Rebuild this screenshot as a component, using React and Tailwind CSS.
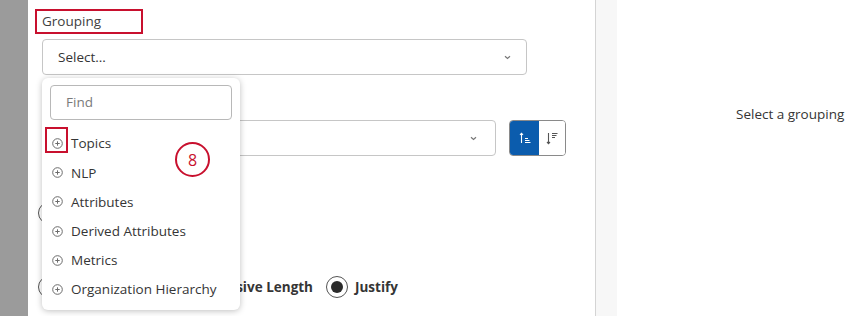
import React from "react";

const font = { fontFamily: '"Open Sans", "Liberation Sans", sans-serif' };

function PlusCircle() {
  return (
    <svg width="11" height="11" viewBox="0 0 11 11" className="shrink-0">
      <circle cx="5.5" cy="5.5" r="4.8" fill="none" stroke="#6b6b6b" strokeWidth="1" />
      <path d="M5.5 3.3v4.4M3.3 5.5h4.4" stroke="#6b6b6b" strokeWidth="1" />
    </svg>
  );
}

function Chevron() {
  return (
    <svg width="7" height="5" viewBox="0 0 7 5">
      <path d="M1 1.2l2.5 2.3L6 1.2" fill="none" stroke="#777" strokeWidth="1.2" />
    </svg>
  );
}

function Radio({ checked }) {
  return (
    <span className="inline-flex h-[22px] w-[22px] shrink-0 items-center justify-center rounded-full border border-[#555] bg-white">
      {checked && <span className="h-[12px] w-[12px] rounded-full bg-[#2b2b2b]" />}
    </span>
  );
}

const items = ["Topics", "NLP", "Attributes", "Derived Attributes", "Metrics", "Organization Hierarchy"];

export default function App() {
  return (
    <div className="relative flex h-[316px] w-[850px] overflow-hidden bg-white text-[#353535]" style={font}>
      <div className="w-[28px] shrink-0 bg-[#9b9b9b]" />
      <div className="flex w-[568px] shrink-0 flex-col border-r border-[#d4d4d4] bg-white">
        <div className="ml-[7px] mt-[9px] flex h-[25px] w-[108px] items-center border-2 border-[#c8102e] pl-[5px] text-[13.5px] text-[#404040]">
          Grouping
        </div>
        <div className="ml-[14px] mt-[5px] flex h-[36px] w-[485px] items-center justify-between rounded-[4px] border border-[#c6c6c6] pl-[15px] pr-[15px] text-[13.5px] text-[#353535]">
          <span>Select...</span>
          <Chevron />
        </div>
        <div className="ml-[14px] mt-[45px] flex items-center gap-[13px]">
          <div className="flex h-[36px] w-[454px] items-center justify-end rounded-[4px] border border-[#c6c6c6] pr-[18px]">
            <Chevron />
          </div>
          <div className="flex h-[36px] w-[57px] overflow-hidden rounded-[4px] border border-[#8a8a8a]">
            <div className="flex w-[29px] items-center justify-center bg-[#0b5cad]">
              <svg width="12" height="12" viewBox="0 0 12 12">
                <path d="M2.5 11V1.2M1 2.8l1.5-1.6 1.5 1.6" fill="none" stroke="#fff" strokeWidth="1.1" />
                <path d="M6 6.5h3M6 8.5h4.5M6 10.5h5.5" stroke="#fff" strokeWidth="1" />
              </svg>
            </div>
            <div className="flex flex-1 items-center justify-center bg-white">
              <svg width="12" height="13" viewBox="0 0 12 13">
                <path d="M2.5 1v10.5M1 10l1.5 1.6L4 10" fill="none" stroke="#555" strokeWidth="1.1" />
                <path d="M6 1.5h5.5M6 3.5h4.5M6 5.5h3" stroke="#555" strokeWidth="1" />
              </svg>
            </div>
          </div>
        </div>
        <div className="ml-[10px] mt-[46px] flex items-center">
          <Radio />
        </div>
        <div className="ml-[10px] mt-[52px] flex items-center text-[13.5px] font-bold text-[#353535]">
          <Radio />
          <span className="ml-[8px] w-[245px] text-right whitespace-nowrap">Progressive Length</span>
          <span className="ml-[13px] flex"><Radio checked /></span>
          <span className="ml-[7px]">Justify</span>
        </div>
      </div>
      <div className="w-[21px] shrink-0 bg-[#f7f7f7]" />
      <div className="flex-1 bg-white pl-[119px] pt-[104px] text-[13.5px] whitespace-nowrap text-[#353535]">
        Select a grouping
      </div>

      <div className="absolute left-[42px] top-[78px] flex h-[232px] w-[198px] flex-col rounded-[6px] bg-white shadow-[0_1px_6px_rgba(0,0,0,0.25)]">
        <div className="mx-[8px] mt-[7px] flex h-[35px] items-center rounded-[4px] border border-[#b8b8b8] pl-[15px] text-[13.5px] text-[#7a7a7a]">
          Find
        </div>
        <div className="mt-[9px] flex flex-col">
          {items.map((t) => (
            <div key={t} className="flex h-[29.2px] items-center gap-[8px] pl-[10px] text-[13.5px] text-[#353535]">
              <PlusCircle />
              <span>{t}</span>
            </div>
          ))}
        </div>
      </div>
      <div className="absolute left-[45px] top-[127px] h-[26px] w-[23px] border-2 border-[#c8102e]" />
      <div className="absolute left-[175px] top-[142px] flex h-[35px] w-[35px] items-center justify-center rounded-full border-[2.5px] border-[#c8102e] bg-white text-[16px] text-[#c8102e]">
        8
      </div>
    </div>
  );
}
